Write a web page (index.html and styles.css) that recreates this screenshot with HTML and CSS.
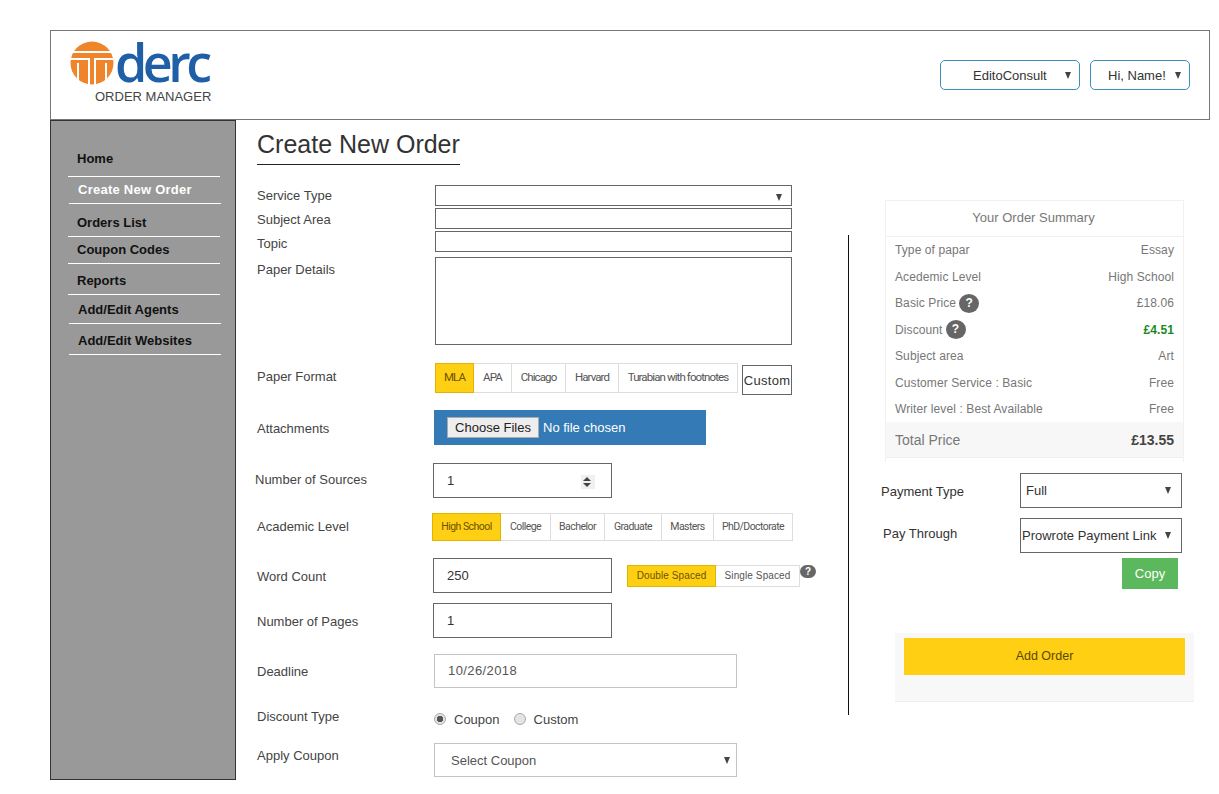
FILE: index.html
```html
<!DOCTYPE html>
<html lang="en">

<head>
  <meta charset="UTF-8">
  <meta name="viewport" content="width=device-width, initial-scale=1.0">
  <title>Create New Order</title>
  <link rel="stylesheet" href="styles.css">
</head>

<body>
  <div class="shell">
    <header class="top">
      <div class="brand">
        <div class="logo">
          <svg class="logo-mark" width="44" height="44" viewBox="0 0 44 44">
            <circle cx="22" cy="22" r="21.5" fill="#f0842a" />
            <path d="M0 11H44M0 18H14M30 18H44M14 18H19V44M30 18H25V44M8 22V40M36 22V40" stroke="#fff" stroke-width="2" fill="none" />
          </svg>
          <span class="logo-word">derc</span>
        </div>
        <div class="brand-sub">ORDER MANAGER</div>
      </div>
      <div class="top-menus">
        <div class="top-menu top-menu-org"><span>EditoConsult</span><i class="caret"></i></div>
        <div class="top-menu top-menu-user"><span>Hi, Name!</span><i class="caret"></i></div>
      </div>
    </header>

    <div class="page">
      <nav class="side">
        <a class="side-link home">Home</a>
        <a class="side-link active create">Create New Order</a>
        <a class="side-link orders">Orders List</a>
        <a class="side-link coupons">Coupon Codes</a>
        <a class="side-link reports">Reports</a>
        <a class="side-link agents">Add/Edit Agents</a>
        <a class="side-link sites">Add/Edit Websites</a>
      </nav>

      <main class="main">
        <h1 class="title">Create New Order</h1>
        <div class="columns">
          <form class="form">
            <div class="row r-service">
              <label>Service Type</label>
              <div class="box box-wide box-short"><i class="caret"></i></div>
            </div>
            <div class="row r-subject">
              <label>Subject Area</label>
              <div class="box box-wide box-short"></div>
            </div>
            <div class="row r-topic">
              <label>Topic</label>
              <div class="box box-wide box-short"></div>
            </div>
            <div class="row r-details">
              <label>Paper Details</label>
              <div class="box box-wide box-area"></div>
            </div>
            <div class="row r-format">
              <label>Paper Format</label>
              <div class="format-wrap">
                <ul class="tabs tabs-format">
                  <li class="on">MLA</li>
                  <li>APA</li>
                  <li>Chicago</li>
                  <li>Harvard</li>
                  <li>Turabian with footnotes</li>
                </ul>
                <div class="custom-btn">Custom</div>
              </div>
            </div>
            <div class="row r-attach">
              <label>Attachments</label>
              <div class="attach"><span class="choose">Choose Files</span><span>No file chosen</span></div>
            </div>
            <div class="row r-sources">
              <label>Number of Sources</label>
              <div class="box box-mid">1
                <span class="spin"><i class="spin-up"></i><i class="spin-down"></i></span>
              </div>
            </div>
            <div class="row r-level">
              <label>Academic Level</label>
              <ul class="tabs tabs-level">
                <li class="on">High School</li>
                <li>College</li>
                <li>Bachelor</li>
                <li>Graduate</li>
                <li>Masters</li>
                <li>PhD/Doctorate</li>
              </ul>
            </div>
            <div class="row r-words">
              <label>Word Count</label>
              <div class="box box-mid">250</div>
              <ul class="tabs tabs-space">
                <li class="on">Double Spaced</li>
                <li>Single Spaced</li>
              </ul>
              <span class="help help-small">?</span>
            </div>
            <div class="row r-pages">
              <label>Number of Pages</label>
              <div class="box box-mid">1</div>
            </div>
            <div class="row r-deadline">
              <label>Deadline</label>
              <div class="soft soft-date">10/26/2018</div>
            </div>
            <div class="row r-discount">
              <label>Discount Type</label>
              <div class="radios">
                <i class="radio radio-on"></i><span>Coupon</span>
                <i class="radio"></i><span>Custom</span>
              </div>
            </div>
            <div class="row r-coupon">
              <label>Apply Coupon</label>
              <div class="soft soft-select">Select Coupon<i class="caret"></i></div>
            </div>
          </form>

          <aside class="aside">
            <section class="summary">
              <h2 class="summary-head">Your Order Summary</h2>
              <dl class="summary-list">
                <div><dt>Type of papar</dt><dd>Essay</dd></div>
                <div><dt>Acedemic Level</dt><dd>High School</dd></div>
                <div><dt>Basic Price <span class="help">?</span></dt><dd>£18.06</dd></div>
                <div><dt>Discount <span class="help">?</span></dt><dd class="green">£4.51</dd></div>
                <div><dt>Subject area</dt><dd>Art</dd></div>
                <div><dt>Customer Service : Basic</dt><dd>Free</dd></div>
                <div><dt>Writer level : Best Available</dt><dd>Free</dd></div>
              </dl>
              <div class="summary-total"><span>Total Price</span><b>£13.55</b></div>
            </section>

            <div class="pay pay-type">
              <label>Payment Type</label>
              <div class="box box-pay">Full<i class="caret"></i></div>
            </div>
            <div class="pay pay-through">
              <label>Pay Through</label>
              <div class="box box-pay box-link">Prowrote Payment Link<i class="caret"></i></div>
            </div>
            <div class="copy-row"><button type="button" class="copy">Copy</button></div>
            <div class="add-panel"><button type="button" class="add">Add Order</button></div>
          </aside>
        </div>
      </main>
    </div>
  </div>
</body>

</html>
```

FILE: styles.css
```css
* {
  margin: 0;
  padding: 0;
  box-sizing: border-box;
}

body {
  padding: 30px 0 0 50px;
  background: #fff;
  color: #333;
  font-family: "Liberation Sans", Arial, sans-serif;
  font-size: 13px;
}

.shell {
  width: 1160px;
}

/* header */
.top {
  display: flex;
  justify-content: space-between;
  height: 90px;
  border: 1px solid #777;
  padding: 10px 19px 0 19px;
}

.logo {
  display: flex;
  align-items: flex-start;
  height: 46px;
}

.logo-word {
  margin: -3px 0 0 1px;
  color: #1f5fa8;
  font-family: "Open Sans", sans-serif;
  font-size: 52px;
  font-weight: 600;
  line-height: 48px;
  letter-spacing: -4.5px;
}

.brand-sub {
  margin: 2px 0 0 25px;
  color: #444;
  line-height: 16px;
}

.top-menus {
  display: flex;
  gap: 10px;
  padding-top: 19px;
}

.top-menu {
  display: flex;
  align-items: center;
  height: 30px;
  border: 1px solid #3a8fb7;
  border-radius: 5px;
}

.top-menu-org {
  width: 140px;
  padding-left: 32px;
}

.top-menu-user {
  width: 100px;
  padding-left: 17px;
}

.top-menu .caret {
  margin-left: auto;
  margin-right: 8px;
}

.caret {
  display: inline-block;
  width: 0;
  height: 0;
  border-left: 3.5px solid transparent;
  border-right: 3.5px solid transparent;
  border-top: 7px solid #444;
}

/* sidebar */
.page {
  display: flex;
}

.side {
  flex: none;
  width: 186px;
  height: 660px;
  padding: 30px 15px 0 17px;
  border: 1px solid #333;
  background: #999;
}

.side-link {
  display: block;
  width: 152px;
  padding-left: 9px;
  border-bottom: 1px solid #fff;
  color: #111;
  font-size: 13px;
  font-weight: bold;
  line-height: 16px;
}

.side-link.active {
  color: #fff;
  letter-spacing: 0.25px;
}

.home { height: 26px; }
.create { height: 27px; margin-left: 1px; padding-top: 5px; }
.orders { height: 33px; padding-top: 11px; }
.coupons { height: 27px; padding-top: 5px; }
.reports { height: 31px; padding-top: 9px; }
.agents { height: 29px; margin-left: 1px; padding-top: 7px; }
.sites { height: 31px; margin-left: 1px; padding-top: 9px; }

/* main */
.main {
  flex: 1;
  padding-left: 21px;
}

.title {
  width: 203px;
  height: 45px;
  padding-top: 9px;
  border-bottom: 1px solid #222;
  font-size: 25px;
  font-weight: normal;
  line-height: 30px;
  white-space: nowrap;
}

.columns {
  display: flex;
}

.form {
  width: 591px;
  height: 615px;
  padding-top: 20px;
}

.row {
  display: flex;
  align-items: flex-start;
  color: #444;
}

.row label {
  flex: none;
  width: 178px;
  line-height: 20px;
}

.box {
  position: relative;
  border: 1px solid #666;
  background: #fff;
  color: #333;
}

.box-wide {
  width: 357px;
}

.box-short {
  height: 21px;
}

.box-short .caret {
  position: absolute;
  right: 9px;
  top: 8px;
}

.box-area {
  height: 88px;
}

.box-mid {
  display: flex;
  align-items: center;
  width: 179px;
  height: 35px;
  padding-left: 13px;
}

.r-service label { height: 21px; padding-top: 1px; }
.r-subject { margin-top: 2px; }
.r-subject label { height: 21px; padding-top: 2px; }
.r-topic { margin-top: 2px; }
.r-topic label { height: 21px; padding-top: 3px; }
.r-details { margin-top: 5px; }
.r-details label { padding-top: 3px; }

.r-format { margin-top: 18px; }
.r-format label { padding-top: 4px; }

.format-wrap {
  display: flex;
  align-items: flex-start;
  gap: 4px;
}

.tabs {
  display: flex;
  list-style: none;
  font-family: "Roboto", "Liberation Sans", sans-serif;
  background: #fff;
  color: #555;
}

.tabs li {
  border: 1px solid #ddd;
  border-left-width: 0;
  text-align: center;
  white-space: nowrap;
}

.tabs li:first-child {
  border-left-width: 1px;
}

.tabs li.on {
  border-color: #e0b400;
  background: #ffcf14;
  color: #6b5300;
}

.tabs-format {
  height: 30px;
  font-size: 11.5px;
  line-height: 27px;
  letter-spacing: -0.9px;
}

.tabs-format li:nth-child(1) { width: 39px; }
.tabs-format li:nth-child(2) { width: 38px; }
.tabs-format li:nth-child(3) { width: 54px; }
.tabs-format li:nth-child(4) { width: 53px; }
.tabs-format li:nth-child(5) { width: 119px; }

.custom-btn {
  width: 50px;
  height: 30px;
  margin-top: 2px;
  border: 1px solid #666;
  color: #333;
  line-height: 29px;
  text-align: center;
  letter-spacing: 0.3px;
}

.r-attach { margin-top: 15px; }
.r-attach label { padding-top: 9px; width: 177px; }

.attach {
  display: flex;
  align-items: center;
  width: 272px;
  height: 35px;
  padding-left: 13px;
  background: #337ab7;
  color: #fff;
}

.choose {
  width: 92px;
  height: 21px;
  margin-right: 4px;
  border: 1px solid #aaa;
  background: #eee;
  color: #222;
  line-height: 19px;
  text-align: center;
}

.r-sources { margin-top: 18px; margin-left: -2px; }
.r-sources label { padding-top: 7px; }

.spin {
  position: absolute;
  right: 16px;
  top: 11px;
  display: flex;
  flex-direction: column;
  justify-content: center;
  gap: 2px;
  width: 14px;
  height: 14px;
  padding-left: 2px;
  background: #f0f0f0;
}

.spin i {
  width: 0;
  height: 0;
  border-left: 4px solid transparent;
  border-right: 4px solid transparent;
}

.spin-up { border-bottom: 4px solid #444; }
.spin-down { border-top: 4px solid #444; }

.r-level { margin-top: 15px; }
.r-level label { width: 175px; padding-top: 4px; }

.tabs-level {
  height: 28px;
  font-size: 10.5px;
  line-height: 26px;
  letter-spacing: -0.55px;
}

.tabs-level li:nth-child(1) { width: 69px; }
.tabs-level li:nth-child(2) { width: 50px; }
.tabs-level li:nth-child(3) { width: 54px; }
.tabs-level li:nth-child(4) { width: 57px; }
.tabs-level li:nth-child(5) { width: 52px; }
.tabs-level li:nth-child(6) { width: 79px; }

.r-words { margin-top: 17px; }
.r-words label { width: 176px; padding-top: 9px; }

.tabs-space {
  height: 22px;
  margin: 7px 0 0 15px;
  font-family: "Liberation Sans", sans-serif;
  font-size: 10px;
  line-height: 20px;
  letter-spacing: 0.1px;
}

.tabs-space li:nth-child(1) { width: 89px; }
.tabs-space li:nth-child(2) { width: 84px; }

.help {
  display: block;
  flex: none;
  width: 20px;
  height: 19px;
  border-radius: 50%;
  background: #666;
  color: #fff;
  font-size: 12px;
  font-weight: bold;
  line-height: 19px;
  text-align: center;
}

.help-small {
  width: 16px;
  height: 13px;
  margin: 7px 0 0 0;
  border-radius: 8px;
  font-size: 10px;
  line-height: 13px;
}

.r-pages { margin-top: 10px; }
.r-pages label { width: 176px; padding-top: 9px; }

.r-deadline { margin-top: 16px; }
.r-deadline label { width: 177px; padding-top: 8px; }

.soft {
  position: relative;
  width: 303px;
  height: 34px;
  border: 1px solid #c4c4c4;
  padding-left: 13px;
  color: #555;
  line-height: 31px;
}

.soft-date {
  letter-spacing: 0.4px;
}

.soft-select {
  padding-left: 16px;
  line-height: 33px;
}

.soft-select .caret {
  position: absolute;
  right: 6px;
  top: 13px;
}

.r-discount { margin-top: 18px; }
.r-discount label { width: 177px; padding-top: 1px; }

.radios {
  display: flex;
  align-items: center;
  height: 20px;
  margin-top: 3px;
  color: #444;
}

.radio {
  width: 12px;
  height: 12px;
  margin-right: 8px;
  border: 1px solid #aaa;
  border-radius: 50%;
  background: #e4e4e4;
}

.radio-on {
  background: radial-gradient(circle, #555 0 3px, #e4e4e4 3.5px);
}

.radios span + .radio {
  margin-left: 14px;
}

.r-coupon { margin-top: 14px; }
.r-coupon label { width: 177px; padding-top: 3px; }

/* right column */
.aside {
  position: relative;
  width: 340px;
  height: 615px;
  margin-top: -1px;
  padding-top: 36px;
  padding-left: 37px;
}

.aside::before {
  content: "";
  position: absolute;
  left: 0;
  top: 71px;
  width: 1px;
  height: 480px;
  background: #111;
}

.summary {
  width: 299px;
  height: 262px;
  border: 1px solid #f1f1f1;
  border-bottom: 0;
  color: #777;
}

.summary-head {
  height: 36px;
  padding-right: 2px;
  border-bottom: 1px solid #f1f1f1;
  font-size: 13px;
  font-weight: normal;
  line-height: 34px;
  text-align: center;
}

.summary-list {
  height: 185px;
  padding: 0 9px;
  font-size: 12px;
  letter-spacing: 0.1px;
}

.summary-list div {
  display: flex;
  justify-content: space-between;
  height: 26.5px;
  line-height: 26px;
}

.summary-list dt {
  display: flex;
  align-items: center;
  gap: 3px;
}

.summary-list dd.green {
  color: #198a1e;
  font-weight: bold;
}

.summary-total {
  display: flex;
  justify-content: space-between;
  height: 36px;
  padding: 0 9px;
  border-bottom: 1px solid #eee;
  background: #f7f7f7;
  font-size: 14px;
  line-height: 37px;
}

.summary-total b {
  color: #444;
}

.pay {
  display: flex;
  align-items: flex-start;
  margin-left: -4px;
  color: #333;
}

.pay label {
  flex: none;
  width: 139px;
}

.box-pay {
  display: flex;
  align-items: center;
  justify-content: space-between;
  width: 162px;
  height: 35px;
  padding: 0 10px 0 5px;
}

.box-link {
  padding-left: 1px;
  white-space: nowrap;
}

.box-pay .caret {
  flex: none;
}

.pay-type { margin-top: 11px; }
.pay-type label { padding-top: 11px; }
.pay-through { margin-top: 10px; }
.pay-through label { padding-top: 8px; padding-left: 2px; }

.copy-row {
  display: flex;
  justify-content: flex-end;
  width: 293px;
  margin-top: 5px;
}

.copy {
  width: 56px;
  height: 31px;
  border: 0;
  background: #5cb85c;
  color: #fff;
  font-family: inherit;
  font-size: 13px;
}

.add-panel {
  width: 299px;
  height: 69px;
  margin: 44px 0 0 10px;
  padding: 5px 9px 0;
  border-bottom: 1px solid #eee;
  background: #f8f8f8;
}

.add {
  width: 281px;
  height: 37px;
  padding-bottom: 2px;
  border: 0;
  background: #ffcf14;
  color: #5a4a00;
  font-family: inherit;
  font-size: 12.5px;
}
```
